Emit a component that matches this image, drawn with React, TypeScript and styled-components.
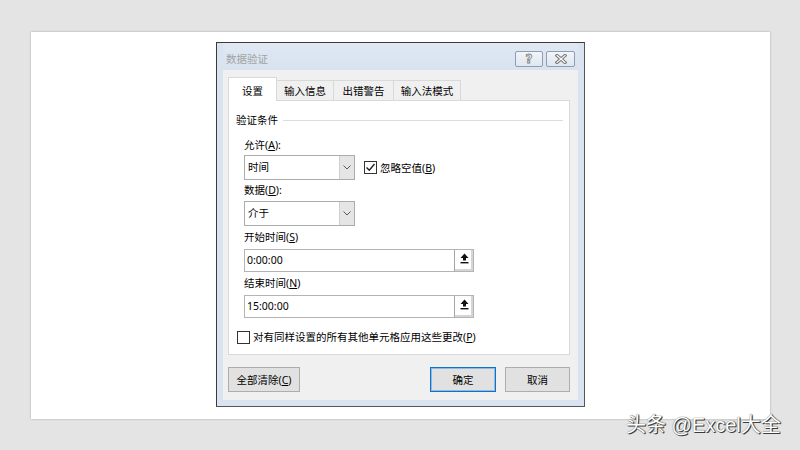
import React from "react";
import styled, { createGlobalStyle } from "styled-components";

const Global = createGlobalStyle`
  html, body { margin: 0; padding: 0; background: #e4e4e4; }
  * { box-sizing: border-box; }
`;

const FONT = `"Noto Sans", "Noto Sans CJK SC", "Liberation Sans", sans-serif`;

const Page = styled.div`
  position: relative;
  width: 800px;
  height: 450px;
  padding: 32px 0 0 31px;
  background: #e4e4e4;
  font-family: ${FONT};
  overflow: hidden;
`;

const Slide = styled.div`
  width: 739px;
  height: 387px;
  background: #ffffff;
  box-shadow: 0 0 2px rgba(0, 0, 0, 0.28);
  padding: 10px 0 0 185px;
`;

const Dialog = styled.div`
  width: 369px;
  height: 365px;
  border: 1px solid #565656;
  border-top-color: #3a3a3a;
  border-left-color: #3a3a3a;
  background: #dae4f0;
  padding: 0 6px 6px 6px;
  display: flex;
  flex-direction: column;
  font-size: 10.5px;
  color: #000;
`;

const TitleBar = styled.div`
  height: 27px;
  display: flex;
  align-items: flex-end;
  justify-content: space-between;
  padding: 0 3px 3px 3px;
  background: linear-gradient(#dfe8f3, #d8e3f0);
`;

const Title = styled.div`
  line-height: 16px;
  color: #a3a3a3;
  font-size: 10.5px;
`;

const CaptionButtons = styled.div`
  display: flex;
  gap: 3px;
`;

const CaptionButton = styled.div<{ $w: number }>`
  width: ${(p) => p.$w}px;
  height: 16px;
  border: 1px solid #8e9db1;
  border-radius: 2px;
  background: linear-gradient(#f2f5f9, #dfe6ef);
  display: flex;
  align-items: center;
  justify-content: center;
  font-family: "DejaVu Sans", sans-serif;
  font-weight: bold;
  font-size: 12px;
  line-height: 12px;
  color: #fbfbfb;
  -webkit-text-stroke: 0.8px #7c7c7c;
`;

const Client = styled.div`
  flex: 1;
  background: #f0f0f0;
  padding: 7px 8px 8px 5px;
  display: flex;
  flex-direction: column;
`;

const TabStrip = styled.div`
  height: 23px;
  display: flex;
  align-items: flex-end;
  position: relative;
  z-index: 1;
`;

const Tab = styled.div<{ $w: number; $active?: boolean }>`
  width: ${(p) => p.$w}px;
  height: ${(p) => (p.$active ? 24 : 20)}px;
  margin-bottom: ${(p) => (p.$active ? -1 : 0)}px;
  margin-left: -1px;
  &:first-child { margin-left: 0; }
  padding-top: ${(p) => (p.$active ? 5 : 2)}px;
  border: 1px solid #d9d9d9;
  border-bottom: none;
  background: ${(p) => (p.$active ? "#ffffff" : "#f0f0f0")};
  text-align: center;
  line-height: 16px;
  position: relative;
  z-index: ${(p) => (p.$active ? 2 : 1)};
`;

const Panel = styled.div`
  width: 342px;
  height: 255px;
  border: 1px solid #d9d9d9;
  background: #ffffff;
  padding: 11px 6px 0 7px;
  display: flex;
  flex-direction: column;
`;

const GroupHeader = styled.div`
  display: flex;
  align-items: center;
  line-height: 16px;
`;

const Rule = styled.div`
  flex: 1;
  height: 1px;
  background: #dcdcdc;
  margin-left: 5px;
`;

const GroupBody = styled.div`
  display: flex;
  flex-direction: column;
  padding-left: 8px;
`;

const Label = styled.div<{ $mt: number }>`
  margin-top: ${(p) => p.$mt}px;
  line-height: 16px;
  height: 16px;
`;

const Mnemonic = styled.span`
  font-family: "Noto Sans", "Liberation Sans", sans-serif;
`;

const Row = styled.div<{ $mt: number }>`
  margin-top: ${(p) => p.$mt}px;
  display: flex;
  align-items: center;
`;

const Combo = styled.div`
  width: 111px;
  height: 25px;
  border: 1px solid #acacac;
  display: flex;
  background: #fff;
`;

const ComboText = styled.div`
  flex: 1;
  padding-left: 3px;
  line-height: 23px;
`;

const ComboButton = styled.div`
  width: 15px;
  border-left: 1px solid #cfcfcf;
  background: #e5e5e5;
  display: flex;
  align-items: center;
  justify-content: center;
`;

const CheckLine = styled.label<{ $ml: number }>`
  margin-left: ${(p) => p.$ml}px;
  display: flex;
  align-items: center;
  gap: 2px;
  line-height: 16px;
`;

const Box = styled.span`
  width: 13px;
  height: 13px;
  border: 1px solid #333;
  background: #fff;
  display: inline-flex;
  align-items: center;
  justify-content: center;
  margin-right: 1px;
`;

const Field = styled.div`
  width: 230px;
  height: 23px;
  border: 1px solid #b4b4b4;
  display: flex;
  background: #fff;
`;

const FieldText = styled.div`
  flex: 1;
  padding-left: 2px;
  line-height: 21px;
`;

const RefButton = styled.div`
  width: 19px;
  border-left: 1px solid #a5a5a5;
  background: #fff;
  box-shadow: inset -2px -2px 0 #d5d5d5;
  display: flex;
  align-items: flex-start;
  justify-content: center;
  padding-top: 3px;
`;

const CheckRow = styled.div`
  margin-top: 11px;
  margin-left: 1px;
`;

const ButtonRow = styled.div`
  margin-top: 12px;
  display: flex;
  justify-content: space-between;
`;

const ButtonGroup = styled.div`
  display: flex;
  gap: 9px;
`;

const Button = styled.div<{ $w: number; $default?: boolean }>`
  width: ${(p) => p.$w}px;
  height: 25px;
  background: #e1e1e1;
  border: 1px solid ${(p) => (p.$default ? "#0a74cf" : "#adadad")};
  box-shadow: ${(p) => (p.$default ? "inset 0 0 0 1px rgba(10,116,207,0.35)" : "none")};
  display: flex;
  align-items: center;
  justify-content: center;
  line-height: 16px;
`;

const Watermark = styled.div`
  position: absolute;
  left: 626px;
  top: 412px;
  font-family: "Liberation Sans", "Noto Sans CJK SC", sans-serif;
  font-size: 20px;
  line-height: 26px;
  color: #ffffff;
  text-shadow: 1px 1px 0 #3c3c3c, 0 0 1px #5a5a5a, 1px 0 1px #5a5a5a;
  white-space: nowrap;
`;

const Chevron = () => (
  <svg width="8" height="5" viewBox="0 0 8 5">
    <path d="M0.5 0.5 L4 4 L7.5 0.5" fill="none" stroke="#5a5a5a" strokeWidth="1" />
  </svg>
);

const Check = () => (
  <svg width="11" height="11" viewBox="0 0 11 11">
    <path d="M1.5 5.5 L4.3 8.3 L9.5 2" fill="none" stroke="#222" strokeWidth="1.4" />
  </svg>
);

const UpArrow = () => (
  <svg width="9" height="11" viewBox="0 0 9 11">
    <path d="M4.5 0.5 L8.5 5 L6 5 L6 7.5 L3 7.5 L3 5 L0.5 5 Z" fill="#111" />
    <rect x="0.5" y="9" width="8" height="1.4" fill="#111" />
  </svg>
);

const CloseGlyph = () => (
  <svg width="12" height="10" viewBox="0 0 12 10">
    <path d="M2 1.5 L10 8.5 M10 1.5 L2 8.5" stroke="#7a7a7a" strokeWidth="3.2" strokeLinecap="square" />
    <path d="M2 1.5 L10 8.5 M10 1.5 L2 8.5" stroke="#fafafa" strokeWidth="1.2" strokeLinecap="square" />
  </svg>
);

const Key = ({ k, colon }: { k: string; colon?: boolean }) => (
  <Mnemonic>
    (<u>{k}</u>){colon ? ":" : ""}
  </Mnemonic>
);

export default function App() {
  return (
    <>
      <Global />
      <Page>
        <Slide>
          <Dialog>
            <TitleBar>
              <Title>数据验证</Title>
              <CaptionButtons>
                <CaptionButton $w={28}>?</CaptionButton>
                <CaptionButton $w={29}>
                  <CloseGlyph />
                </CaptionButton>
              </CaptionButtons>
            </TitleBar>
            <Client>
              <TabStrip>
                <Tab $w={49} $active>设置</Tab>
                <Tab $w={58}>输入信息</Tab>
                <Tab $w={61}>出错警告</Tab>
                <Tab $w={68}>输入法模式</Tab>
              </TabStrip>
              <Panel>
                <GroupHeader>
                  <span>验证条件</span>
                  <Rule />
                </GroupHeader>
                <GroupBody>
                  <Label $mt={9}>
                    允许<Key k="A" colon />
                  </Label>
                  <Row $mt={2}>
                    <Combo>
                      <ComboText>时间</ComboText>
                      <ComboButton>
                        <Chevron />
                      </ComboButton>
                    </Combo>
                    <CheckLine $ml={9}>
                      <Box>
                        <Check />
                      </Box>
                      <span>
                        忽略空值<Key k="B" />
                      </span>
                    </CheckLine>
                  </Row>
                  <Label $mt={2}>
                    数据<Key k="D" colon />
                  </Label>
                  <Row $mt={3}>
                    <Combo>
                      <ComboText>介于</ComboText>
                      <ComboButton>
                        <Chevron />
                      </ComboButton>
                    </Combo>
                  </Row>
                  <Label $mt={3}>
                    开始时间<Key k="S" />
                  </Label>
                  <Row $mt={4}>
                    <Field>
                      <FieldText>0:00:00</FieldText>
                      <RefButton>
                        <UpArrow />
                      </RefButton>
                    </Field>
                  </Row>
                  <Label $mt={3}>
                    结束时间<Key k="N" />
                  </Label>
                  <Row $mt={4}>
                    <Field>
                      <FieldText>15:00:00</FieldText>
                      <RefButton>
                        <UpArrow />
                      </RefButton>
                    </Field>
                  </Row>
                </GroupBody>
                <CheckRow>
                  <CheckLine $ml={0}>
                    <Box />
                    <span>
                      对有同样设置的所有其他单元格应用这些更改<Key k="P" />
                    </span>
                  </CheckLine>
                </CheckRow>
              </Panel>
              <ButtonRow>
                <Button $w={72}>
                  <span>
                    全部清除<Key k="C" />
                  </span>
                </Button>
                <ButtonGroup>
                  <Button $w={66} $default>
                    确定
                  </Button>
                  <Button $w={65}>取消</Button>
                </ButtonGroup>
              </ButtonRow>
            </Client>
          </Dialog>
        </Slide>
        <Watermark>头条 @Excel大全</Watermark>
      </Page>
    </>
  );
}
